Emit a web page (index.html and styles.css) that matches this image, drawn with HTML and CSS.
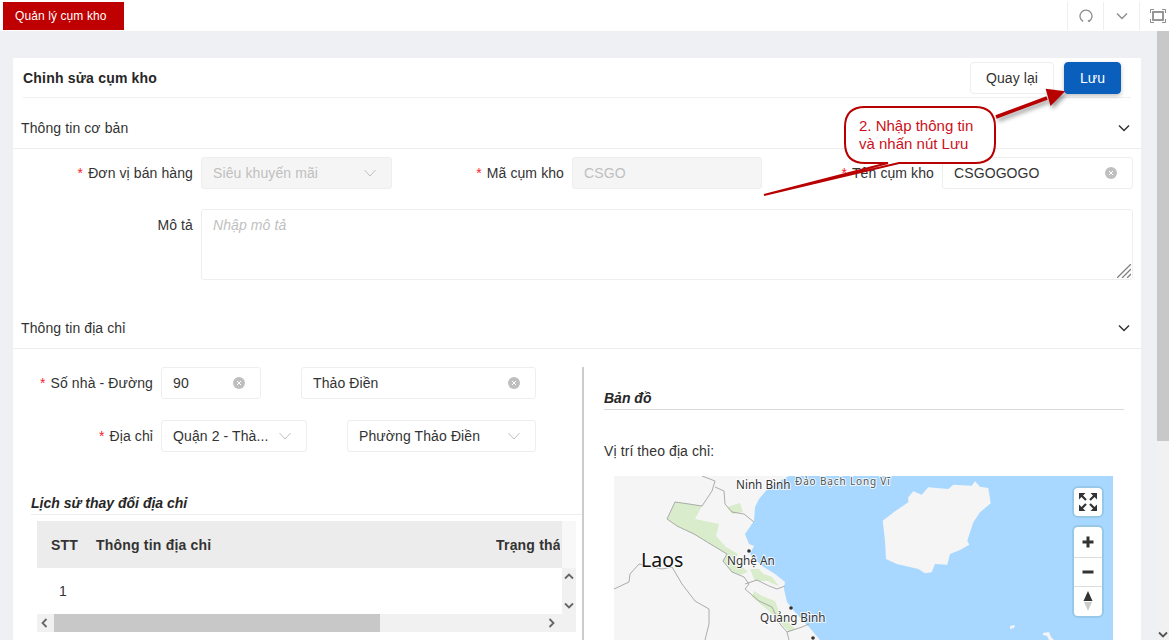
FILE: index.html
```html
<!DOCTYPE html>
<html lang="vi">
<head>
    <meta charset="UTF-8">
    <meta name="viewport" content="width=device-width, initial-scale=1.0">
    <title>Quản lý cụm kho</title>
    <link rel="stylesheet" href="styles.css">
</head>
<body>
    <header class="topbar">
        <a class="tab" href="#">Quản lý cụm kho</a>
        <div class="tools">
            <div class="tool">
                <svg width="14" height="14" viewBox="0 0 14 14"><path d="M4.2 12.4A6 6 0 1 1 9.8 12.4" fill="none" stroke="#8c8c8c" stroke-width="1.3"/><path d="M9 11.2l1.6 1.6" stroke="#8c8c8c" stroke-width="1.3"/></svg>
            </div>
            <div class="tool">
                <svg width="12" height="8" viewBox="0 0 12 8"><path d="M1 1.5l5 5 5-5" fill="none" stroke="#8c8c8c" stroke-width="1.4"/></svg>
            </div>
            <div class="tool">
                <svg width="16" height="14" viewBox="0 0 16 14"><path d="M.5 4V.5H4M12 .5h3.5V4M15.500 10v3.500H12M4 13.500H.5V10" fill="none" stroke="#8c8c8c"/><rect x="3" y="3" width="10" height="8" fill="none" stroke="#8c8c8c" stroke-width="1.800"/></svg>
            </div>
        </div>
    </header>

    <div class="page">
        <main class="content">
            <div class="card">
                <div class="card-head">
                    <h1>Chỉnh sửa cụm kho</h1>
                    <div class="actions">
                        <button class="btn">Quay lại</button>
                        <button class="btn btn-primary">Lưu</button>
                    </div>
                </div>

                <div class="section-title section-first">
                    <span>Thông tin cơ bản</span>
                    <svg width="12" height="8" viewBox="0 0 12 8"><path d="M1 1.500l5 5 5-5" fill="none" stroke="#333" stroke-width="1.500"/></svg>
                </div>

                <div class="form-row">
                    <label class="label label-wide"><i>*</i>Đơn vị bán hàng</label>
                    <div class="control disabled w-191">
                        <span class="value">Siêu khuyến mãi</span>
                        <svg class="arrow" width="12" height="8" viewBox="0 0 12 8"><path d="M.5 1l5.500 6 5.500-6" fill="none" stroke="#bfbfbf"/></svg>
                    </div>
                    <label class="label"><i>*</i>Mã cụm kho</label>
                    <div class="control disabled w-190">
                        <span class="value">CSGO</span>
                    </div>
                    <label class="label"><i>*</i>Tên cụm kho</label>
                    <div class="control w-191">
                        <span class="value">CSGOGOGO</span>
                        <svg class="clear" width="12" height="12" viewBox="0 0 12 12"><circle cx="6" cy="6" r="6" fill="#bfbfbf"/><path d="M4 4l4 4M8 4l-4 4" stroke="#fff"/></svg>
                    </div>
                </div>

                <div class="form-row row-note">
                    <label class="label label-wide">Mô tả</label>
                    <div class="note">
                        Nhập mô tả
                        <svg class="resize" width="14" height="14" viewBox="0 0 14 14"><path d="M0 14L14 0M5 14l9-9M10 14l4-4" stroke="#808080" stroke-width="1.300"/></svg>
                    </div>
                </div>

                <div class="section-title section-second">
                    <span>Thông tin địa chỉ</span>
                    <svg width="12" height="8" viewBox="0 0 12 8"><path d="M1 1.500l5 5 5-5" fill="none" stroke="#333" stroke-width="1.500"/></svg>
                </div>

                <div class="address">
                    <div class="address-left">
                        <div class="addr-row">
                            <label class="label label-addr"><i>*</i>Số nhà - Đường</label>
                            <div class="control w-100">
                                <span class="value">90</span>
                                <svg class="clear" width="12" height="12" viewBox="0 0 12 12"><circle cx="6" cy="6" r="6" fill="#bfbfbf"/><path d="M4 4l4 4M8 4l-4 4" stroke="#fff"/></svg>
                            </div>
                            <div class="control w-235">
                                <span class="value">Thảo Điền</span>
                                <svg class="clear" width="12" height="12" viewBox="0 0 12 12"><circle cx="6" cy="6" r="6" fill="#bfbfbf"/><path d="M4 4l4 4M8 4l-4 4" stroke="#fff"/></svg>
                            </div>
                        </div>
                        <div class="addr-row addr-row-2">
                            <label class="label label-addr"><i>*</i>Địa chỉ</label>
                            <div class="control w-146">
                                <span class="value">Quận 2 - Thà...</span>
                                <svg class="arrow" width="12" height="8" viewBox="0 0 12 8"><path d="M.5 1l5.500 6 5.500-6" fill="none" stroke="#bfbfbf"/></svg>
                            </div>
                            <div class="control w-189">
                                <span class="value">Phường Thảo Điền</span>
                                <svg class="arrow" width="12" height="8" viewBox="0 0 12 8"><path d="M.5 1l5.500 6 5.500-6" fill="none" stroke="#bfbfbf"/></svg>
                            </div>
                        </div>

                        <h2 class="sub-title history-title">Lịch sử thay đổi địa chỉ</h2>
                        <div class="history">
                            <div class="history-head">
                                <div class="history-cols">
                                    <span class="col-stt">STT</span>
                                    <span class="col-info">Thông tin địa chỉ</span>
                                    <span class="col-state">Trạng thái</span>
                                </div>
                                <div class="head-filler"></div>
                            </div>
                            <div class="history-body">
                                <div class="history-row"><span class="col-num">1</span></div>
                                <div class="v-scroll">
                                    <svg width="10" height="7" viewBox="0 0 10 7"><path d="M1 5.500l4-4 4 4" fill="none" stroke="#666" stroke-width="1.800"/></svg>
                                    <svg width="10" height="7" viewBox="0 0 10 7"><path d="M1 1.500l4 4 4-4" fill="none" stroke="#666" stroke-width="1.800"/></svg>
                                </div>
                            </div>
                            <div class="h-scroll">
                                <svg width="7" height="10" viewBox="0 0 7 10"><path d="M5.500 1l-4 4 4 4" fill="none" stroke="#666" stroke-width="1.800"/></svg>
                                <div class="h-track"><div class="h-thumb"></div></div>
                                <svg width="7" height="10" viewBox="0 0 7 10"><path d="M1.500 1l4 4-4 4" fill="none" stroke="#666" stroke-width="1.800"/></svg>
                            </div>
                        </div>
                    </div>

                    <div class="address-right">
                        <h2 class="sub-title">Bản đồ</h2>
                        <p class="map-caption">Vị trí theo địa chỉ:</p>
                        <div class="map">
                            <svg class="map-art" width="499" height="164" viewBox="0 0 499 164">
                                <rect width="499" height="164" fill="#a8d8ff"/>
                                <!-- dat lien -->
                                <path fill="#f5f5f5" d="M0 0H175L155 11 145 23 141 31 140 45 131 58 135 68 140 70 136 78 148 90 161 98 171 106 170 113 173 126 180 135 195 151 206 164H0Z"/>
                                <g class="map-green">
                                    <path d="M61 26L88 30 81 43 105 48 102 60 112 71 124 78 120 84 134 96 126 99 118 96 109 85 113 78 98 69 80 58 63 50 53 43Z"/>
                                    <path d="M113 31L126 27 129 36 118 38Z"/>
                                    <path d="M136 93L145 93 155 105 141 105Z"/>
                                    <path d="M147 97L158 101 165 110 155 106Z"/>
                                    <path d="M140 115L148 120 161 125 165 136 181 153 175 156 155 135 138 121Z"/>
                                </g>
                                <!-- dao Hai Nam -->
                                <path fill="#f5f5f5" d="M294.300 21.300L299.300 15.300 307.700 18.700 314.300 11.300 334.300 13 339.300 8.700 357.700 9.700 361 5.300 366 10.700 374.300 12 376.700 27.300 366 36.300 359.300 46.300 353.300 64.700 355.300 68.700 346 74 336 78 333.300 88.700 321 88 317.700 96.300 311 97.300 304.300 93 282.700 88 272 83 271 64.700 268.700 44.700 281 35.300 294.300 26.300Z"/>
                                <path fill="#f5f5f5" d="M396 150l5-1-1 3-4 1ZM429 157l6-1 2 5 3 3h-5l-2-4-4-1Z"/>
                                <g class="map-lines">
                                    <path d="M88 0L101 5 98 15 88 30 75 28 61 26 53 43 63 50 80 58 98 69 113 78 109 85 118 96 130 101 135 108 131 113 145 125 158 131 166 148 173 156 175 164"/>
                                    <path d="M101 11L110 15 111 28 118 36 130 38 140 46"/>
                                    <path d="M131 108L143 104 155 110 163 113 171 110"/>
                                    <path d="M0 113L15 106 16 98 25 88 48 93 58 91 68 108 81 125 95 133 95 148 91 164"/>
                                    <path d="M173 156L188 151 195 148"/>
                                </g>
                                <g fill="#333">
                                    <circle cx="135" cy="75" r="1.800"/>
                                    <circle cx="177" cy="132" r="1.800"/>
                                    <circle cx="199" cy="162" r="1.800"/>
                                </g>
                                <text class="place" x="122" y="13">Ninh Bình</text>
                                <text class="place place-sea" x="181" y="9">Đảo Bạch Long Vĩ</text>
                                <text class="place place-big" x="27" y="91">Laos</text>
                                <text class="place" x="113" y="89">Nghệ An</text>
                                <text class="place" x="146" y="146">Quảng Bình</text>
                            </svg>
                            <div class="map-controls">
                                <div class="map-group">
                                    <div class="map-btn map-btn-single">
                                        <svg width="24" height="24" viewBox="0 0 24 24"><g fill="#333"><path d="M3 3h6.500L3 9.500Z"/><path d="M21 3h-6.500L21 9.500Z"/><path d="M3 21h6.500L3 14.500Z"/><path d="M21 21h-6.500L21 14.500Z"/></g><path d="M5 5l5 5M19 5l-5 5M5 19l5-5M19 19l-5-5" stroke="#333" stroke-width="2.200"/></svg>
                                    </div>
                                </div>
                                <div class="map-group">
                                    <div class="map-btn">
                                        <svg width="14" height="14" viewBox="0 0 14 14"><path d="M7 1.500v11M1.500 7h11" stroke="#333" stroke-width="3"/></svg>
                                    </div>
                                    <div class="map-btn">
                                        <svg width="14" height="14" viewBox="0 0 14 14"><path d="M1.500 7h11" stroke="#333" stroke-width="3"/></svg>
                                    </div>
                                    <div class="map-btn">
                                        <svg width="10" height="22" viewBox="0 0 10 22"><path d="M5 1l4.500 10H.5Z" fill="#333"/><path d="M5 21l4-9H1Z" fill="#ccc"/></svg>
                                    </div>
                                </div>
                            </div>
                        </div>
                    </div>
                </div>
            </div>
        </main>
        <div class="page-scroll">
            <div class="page-thumb"></div>
            <svg class="page-down" width="10" height="7" viewBox="0 0 10 7"><path d="M1 1.500l4 4 4-4" fill="none" stroke="#555" stroke-width="1.800"/></svg>
        </div>
    </div>

    <!-- chu thich huong dan nam de len giao dien -->
    <svg class="note-layer" width="1169" height="640" viewBox="0 0 1169 640">
        <g class="shadow">
            <path d="M996 117L1047 98" stroke="#b80000" stroke-width="3.500"/>
            <path d="M1063 92L1047 90 1051 104Z" fill="#b80000" stroke="#b80000" stroke-width="2"/>
        </g>
        <path class="bubble" d="M865 107H975Q995 107 995 127V143Q995 163 975 163H899L764 195 888 163H865Q845 163 845 143V127Q845 107 865 107Z"/>
        <text class="bubble-text" x="859" y="131">2. Nhập thông tin</text>
        <text class="bubble-text" x="859" y="149">và nhấn nút Lưu</text>
    </svg>
</body>
</html>
```

FILE: styles.css
```css
* {
    box-sizing: border-box;
}

html, body {
    margin: 0;
    padding: 0;
    height: 640px;
    overflow: hidden;
}

body {
    position: relative;
    font-family: "Liberation Sans", Arial, sans-serif;
    font-size: 14px;
    letter-spacing: 0.1px;
    color: #333;
    background: #eff0f4;
}

.topbar {
    display: flex;
    justify-content: space-between;
    height: 31px;
    padding-top: 2px;
    background: #fff;
}

.tab {
    display: flex;
    align-items: center;
    width: 121px;
    height: 28px;
    margin-left: 3px;
    padding-left: 12px;
    background: #bf0000;
    color: #fff;
    font-size: 12px;
    text-decoration: none;
}

.tools {
    display: flex;
    height: 28px;
    margin-right: -6px;
}

.tool {
    display: flex;
    align-items: center;
    justify-content: center;
    width: 36px;
    border-left: 1px solid #eee;
}

.page {
    display: flex;
    height: 609px;
}

.content {
    flex: 1;
    padding: 27px 16px 0 13px;
    overflow: hidden;
}

.card {
    height: 600px;
    background: #fff;
}

.card-head {
    display: flex;
    align-items: center;
    justify-content: space-between;
    height: 40px;
    margin: 0 10px;
    border-bottom: 1px solid #f0f0f0;
}

.card-head h1 {
    margin: 0;
    font-size: 14px;
    letter-spacing: 0.2px;
    color: #262626;
}

.actions {
    display: flex;
    gap: 10px;
    margin-top: 1px;
    margin-right: 10px;
}

.btn {
    height: 32px;
    width: 84px;
    font-family: inherit;
    font-size: 14px;
    letter-spacing: inherit;
    color: #333;
    background: #fff;
    border: 1px solid #eee;
    border-radius: 4px;
}

.btn-primary {
    width: 57px;
    color: #fff;
    background: #0a5fbd;
    border-color: #0a5fbd;
    box-shadow: 0 2px 4px rgba(0, 0, 0, 0.25);
}

.section-title {
    display: flex;
    align-items: center;
    justify-content: space-between;
    height: 41px;
    padding: 0 11px 0 8px;
    border-bottom: 1px solid #eee;
}

.section-first {
    margin-top: 10px;
}

.section-second {
    margin-top: 28px;
}

.form-row {
    display: flex;
    margin-top: 8px;
}

.row-note {
    margin-top: 20px;
}

.label {
    width: 172px;
    height: 32px;
    margin-right: 8px;
    line-height: 32px;
    text-align: right;
    color: #333;
}

.label i {
    margin-right: 5px;
    font-style: normal;
    color: #f5222d;
}

.label-wide {
    width: 180px;
}

.label-addr {
    width: 140px;
}

.control {
    display: flex;
    align-items: center;
    height: 32px;
    padding: 0 15px 0 11px;
    background: #fff;
    border: 1px solid #eee;
    border-radius: 3px;
}

.disabled {
    background: #f5f5f5;
    color: #bfbfbf;
}

.value {
    flex: 1;
    min-width: 0;
    white-space: nowrap;
}

.arrow {
    flex: none;
    margin-left: 8px;
}

.clear {
    flex: none;
    margin-left: 8px;
}

.w-100 { width: 100px; }
.w-146 { width: 146px; }
.w-189 { width: 189px; }
.w-190 { width: 190px; }
.w-191 { width: 191px; }
.w-235 { width: 235px; }

.note {
    position: relative;
    width: 932px;
    height: 71px;
    padding: 7px 11px;
    border: 1px solid #eee;
    border-radius: 3px;
    font-style: italic;
    color: #bfbfbf;
}

.resize {
    position: absolute;
    right: 1px;
    bottom: 1px;
}

.address {
    display: flex;
    height: 300px;
}

.address-left {
    width: 571px;
    margin-top: 18px;
    border-right: 2px solid #ccc;
}

.addr-row {
    display: flex;
}

.addr-row .control + .control {
    margin-left: 40px;
}

.addr-row-2 {
    margin-top: 21px;
}

.sub-title {
    height: 23px;
    margin: 0;
    font-size: 14px;
    font-style: italic;
    font-weight: bold;
    line-height: 22px;
    letter-spacing: 0;
    color: #262626;
    border-bottom: 1px solid #d9d9d9;
}

.history-title {
    margin: 40px 0 0 18px;
    border-bottom-color: #eee;
}

.history {
    width: 539px;
    margin: 6px 0 0 24px;
}

.history-head {
    display: flex;
    height: 47px;
}

.history-cols {
    display: flex;
    align-items: center;
    width: 525px;
    padding-left: 14px;
    white-space: nowrap;
    font-weight: bold;
    letter-spacing: 0.2px;
    background: #ececec;
}

.col-stt {
    width: 45px;
}

.col-info {
    width: 400px;
}

.col-state {
    width: 64px;
    overflow: hidden;
}

.head-filler {
    flex: 1;
    background: #f8f8f8;
}

.history-body {
    display: flex;
    height: 46px;
}

.history-row {
    display: flex;
    align-items: center;
    width: 525px;
    padding-left: 22px;
}

.v-scroll {
    display: flex;
    flex: 1;
    flex-direction: column;
    align-items: center;
    justify-content: space-between;
    padding: 5px 0;
    background: #f1f1f1;
}

.h-scroll {
    display: flex;
    align-items: center;
    height: 18px;
    padding: 0 21px 0 4px;
    background: #f1f1f1;
}

.h-track {
    flex: 1;
    height: 18px;
    margin: 0 6px;
}

.h-thumb {
    width: 326px;
    height: 100%;
    background: #c8c8c8;
}

.address-right {
    flex: 1;
    padding: 38px 0 0 20px;
}

.address-right .sub-title {
    width: 520px;
}

.map-caption {
    height: 20px;
    margin: 31px 0 0;
    line-height: 20px;
}

.map {
    position: relative;
    width: 499px;
    height: 164px;
    margin: 15px 0 0 10px;
    overflow: hidden;
}

.map-art {
    display: block;
}

.map-green {
    fill: #d9eccb;
    filter: blur(0.6px);
}

.map-lines {
    fill: none;
    stroke: #999;
    stroke-width: 0.8;
}

.place {
    font-family: "Noto Sans", sans-serif;
    font-size: 11.7px;
    letter-spacing: 0;
    fill: #333;
    stroke: rgba(255, 255, 255, 0.8);
    stroke-width: 2px;
    paint-order: stroke;
}

.place-sea {
    font-size: 10px;
    letter-spacing: 0.85px;
    fill: #555;
}

.place-big {
    font-size: 19.5px;
    fill: #111;
}

.map-controls {
    position: absolute;
    top: 10px;
    right: 9px;
    display: flex;
    flex-direction: column;
    gap: 7px;
}

.map-group {
    width: 32px;
    background: #fff;
    border: 2px solid #98c8e8;
    border-radius: 6px;
    overflow: hidden;
}

.map-btn {
    display: flex;
    align-items: center;
    justify-content: center;
    height: 29.5px;
}

.map-btn-single {
    height: 28px;
}

.map-btn + .map-btn {
    border-top: 1px solid #ddd;
}

.page-scroll {
    position: relative;
    width: 12px;
    background: #f1f1f1;
}

.page-thumb {
    height: 410px;
    background: #c8c8c8;
}

.page-down {
    position: absolute;
    left: 1px;
    bottom: 2px;
}

.note-layer {
    position: absolute;
    top: 0;
    left: 0;
    pointer-events: none;
}

.shadow {
    filter: drop-shadow(2px 3px 2px rgba(0, 0, 0, 0.4));
}

.bubble {
    fill: #fff;
    stroke: #b80000;
    stroke-width: 2;
}

.bubble-text {
    font-family: "Liberation Sans", Arial, sans-serif;
    font-size: 15px;
    letter-spacing: 0;
    fill: #cc1020;
}
```
